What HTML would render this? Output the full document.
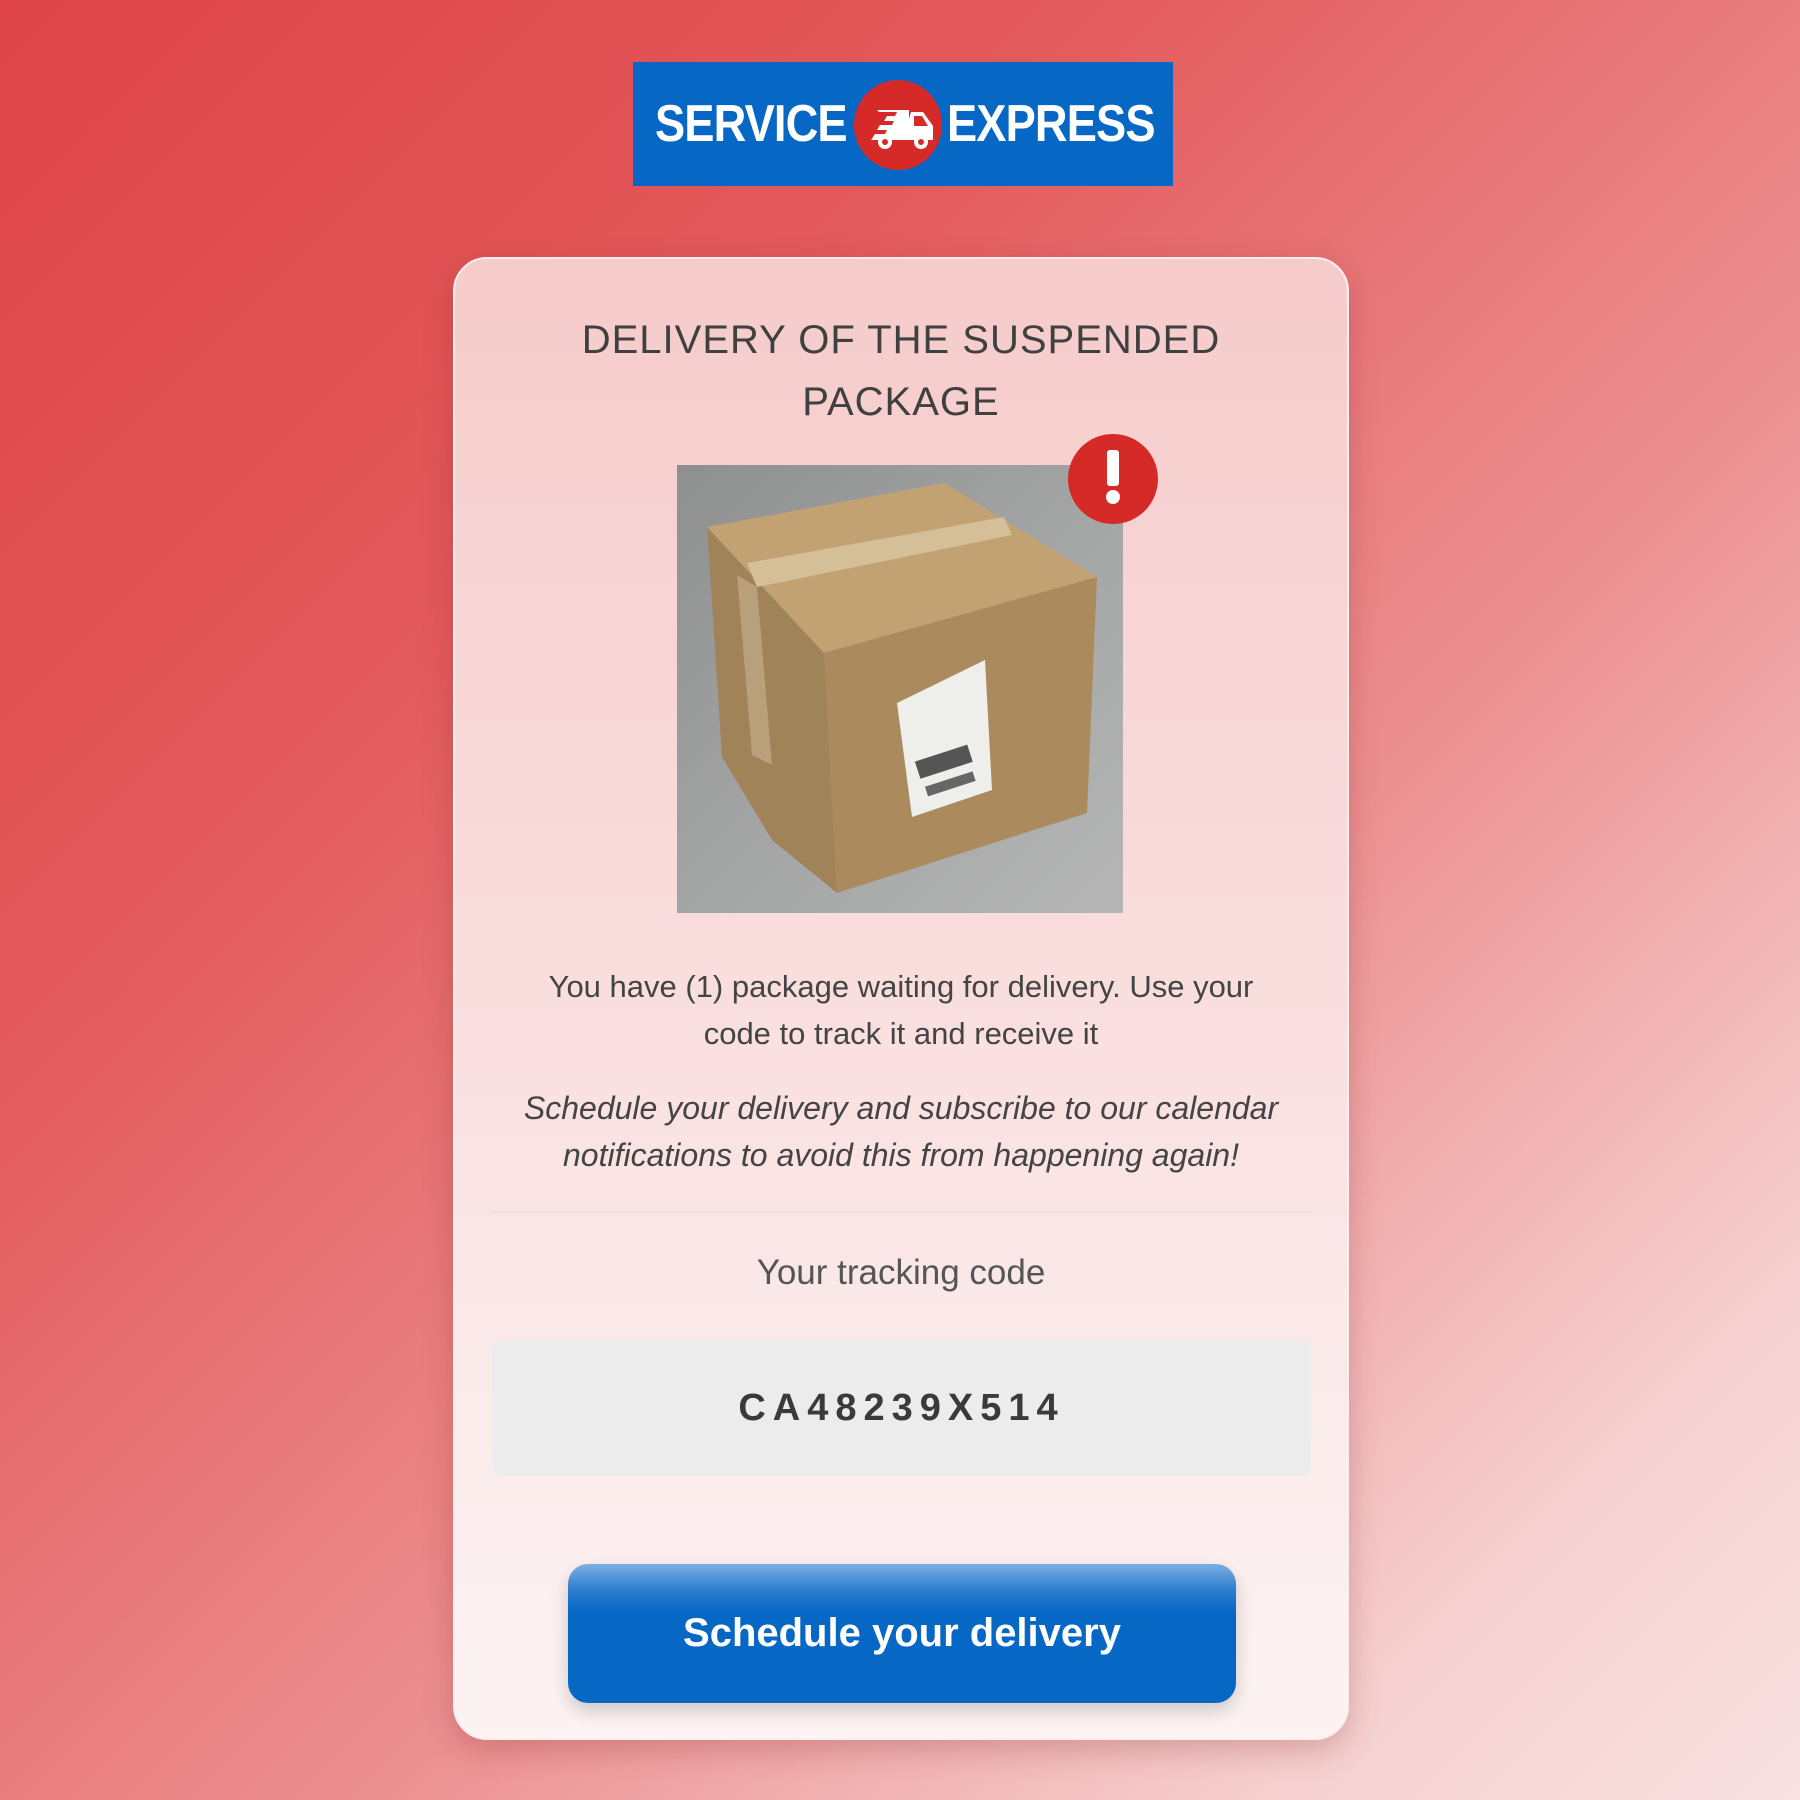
<!DOCTYPE html>
<html><head><meta charset="utf-8"><style>
html,body{margin:0;padding:0}
body{width:1800px;height:1800px;position:relative;overflow:hidden;font-family:"Liberation Sans",sans-serif;
background:linear-gradient(135deg,#de4447 0%,#e35a5c 30%,#ec8f90 60%,#f6cfcf 85%,#f9e2e2 100%);}
.logo{position:absolute;left:633px;top:62px;width:540px;height:124px;background:#0767c5;}
.logo .t{position:absolute;top:30px;font-size:52px;font-weight:bold;color:#fff;letter-spacing:-1px;line-height:64px;transform:scaleX(0.87);transform-origin:0 0;white-space:nowrap}
.card{position:absolute;left:453px;top:257px;width:892px;height:1479px;border-radius:34px;
background:linear-gradient(180deg,#f6cbcb 0%,#f9dcdc 45%,#fbeaea 75%,#fdf3f3 100%);border:2px solid #fbeeee;
box-shadow:0 10px 30px rgba(120,30,30,.25);}
.title{position:absolute;left:0;width:892px;top:50px;text-align:center;font-size:40px;line-height:62px;color:#404040;letter-spacing:1px}
.p{position:absolute;left:0;width:892px;text-align:center;font-size:31px;line-height:47px;color:#444;white-space:nowrap}
.btn{position:absolute;left:113px;top:1305px;width:668px;height:139px;border-radius:20px;
background:linear-gradient(180deg,#7daee2 0%,#2f7fd0 18%,#0767c5 35%,#0767c5 100%);
box-shadow:0 8px 18px rgba(0,0,0,.18);color:#fff;font-weight:bold;font-size:40px;text-align:center;line-height:139px}
</style></head><body>
<div class="logo">
 <div class="t" style="left:22px">SERVICE</div>
 <div class="t" style="left:314px">EXPRESS</div>
 <svg style="position:absolute;left:220px;top:18px" width="90" height="90" viewBox="0 0 90 90">
  <ellipse cx="45" cy="45" rx="44" ry="45" fill="#d52a28"/>
  <path d="M58 32 h12 l10 14 v14 h-30 z" fill="#fff"/>
  <path d="M61 36 h8 l6 10 h-14z" fill="#d52a28"/>
  <path d="M24 30 h32 v30 h-38 l4-6 h10 l2-4 h-10 l3-5 h12 l2-4 h-10 l3-5 h8 l2-4 h-18z" fill="#fff"/>
  <circle cx="32" cy="62" r="7" fill="#fff"/><circle cx="32" cy="62" r="3" fill="#d52a28"/>
  <circle cx="68" cy="62" r="7" fill="#fff"/><circle cx="68" cy="62" r="3" fill="#d52a28"/>
 </svg>
</div>
<div class="card">
 <div class="title">DELIVERY OF THE SUSPENDED<br>PACKAGE</div>
 <svg style="position:absolute;left:222px;top:206px" width="446" height="448" viewBox="0 0 446 448">
  <defs><linearGradient id="fl" x1="0" y1="0" x2="1" y2="1"><stop offset="0" stop-color="#8e9090"/><stop offset=".5" stop-color="#a3a5a5"/><stop offset="1" stop-color="#b5b6b5"/></linearGradient></defs>
  <rect width="446" height="448" fill="url(#fl)"/>
  <polygon points="30,62 147,188 160,428 95,375 45,292" fill="#a1835a"/>
  <polygon points="30,62 267,18 420,112 147,188" fill="#c2a272"/>
  <polygon points="147,188 420,112 410,348 160,428" fill="#ab8a5e"/>
  <polygon points="70,98 327,52 335,70 80,122" fill="#d4bf98"/>
  <polygon points="60,110 80,122 95,300 75,290" fill="#b9a07a"/>
  <polygon points="220,238 308,195 315,325 235,352" fill="#eeeeea"/>
  <rect x="240" y="290" width="55" height="18" fill="#555" transform="rotate(-18 260 300)"/>
  <rect x="248" y="318" width="50" height="10" fill="#666" transform="rotate(-18 260 320)"/>
 </svg>
 <svg style="position:absolute;left:613px;top:175px" width="90" height="90" viewBox="0 0 90 90">
  <circle cx="45" cy="45" r="45" fill="#d52a28"/>
  <rect x="39" y="16" width="12" height="36" rx="3" fill="#fff"/>
  <circle cx="45" cy="63" r="7" fill="#fff"/>
 </svg>
 <div class="p" style="top:704px">You have (1) package waiting for delivery. Use your<br>code to track it and receive it</div>
 <div class="p" style="top:826px;font-style:italic;font-size:32px">Schedule your delivery and subscribe to our calendar<br>notifications to avoid this from happening again!</div>
 <div style="position:absolute;left:37px;width:819px;top:952px;height:2px;background:#f0dede"></div>
 <div class="p" style="top:990px;font-size:35px;color:#555">Your tracking code</div>
 <div style="position:absolute;left:37px;width:819px;top:1081px;height:136px;border-radius:10px;background:#ececec;text-align:center;line-height:136px;font-size:38px;font-weight:bold;letter-spacing:7px;color:#3a3a3a">CA48239X514</div>
 <div class="btn">Schedule your delivery</div>
</div>
</body></html>
